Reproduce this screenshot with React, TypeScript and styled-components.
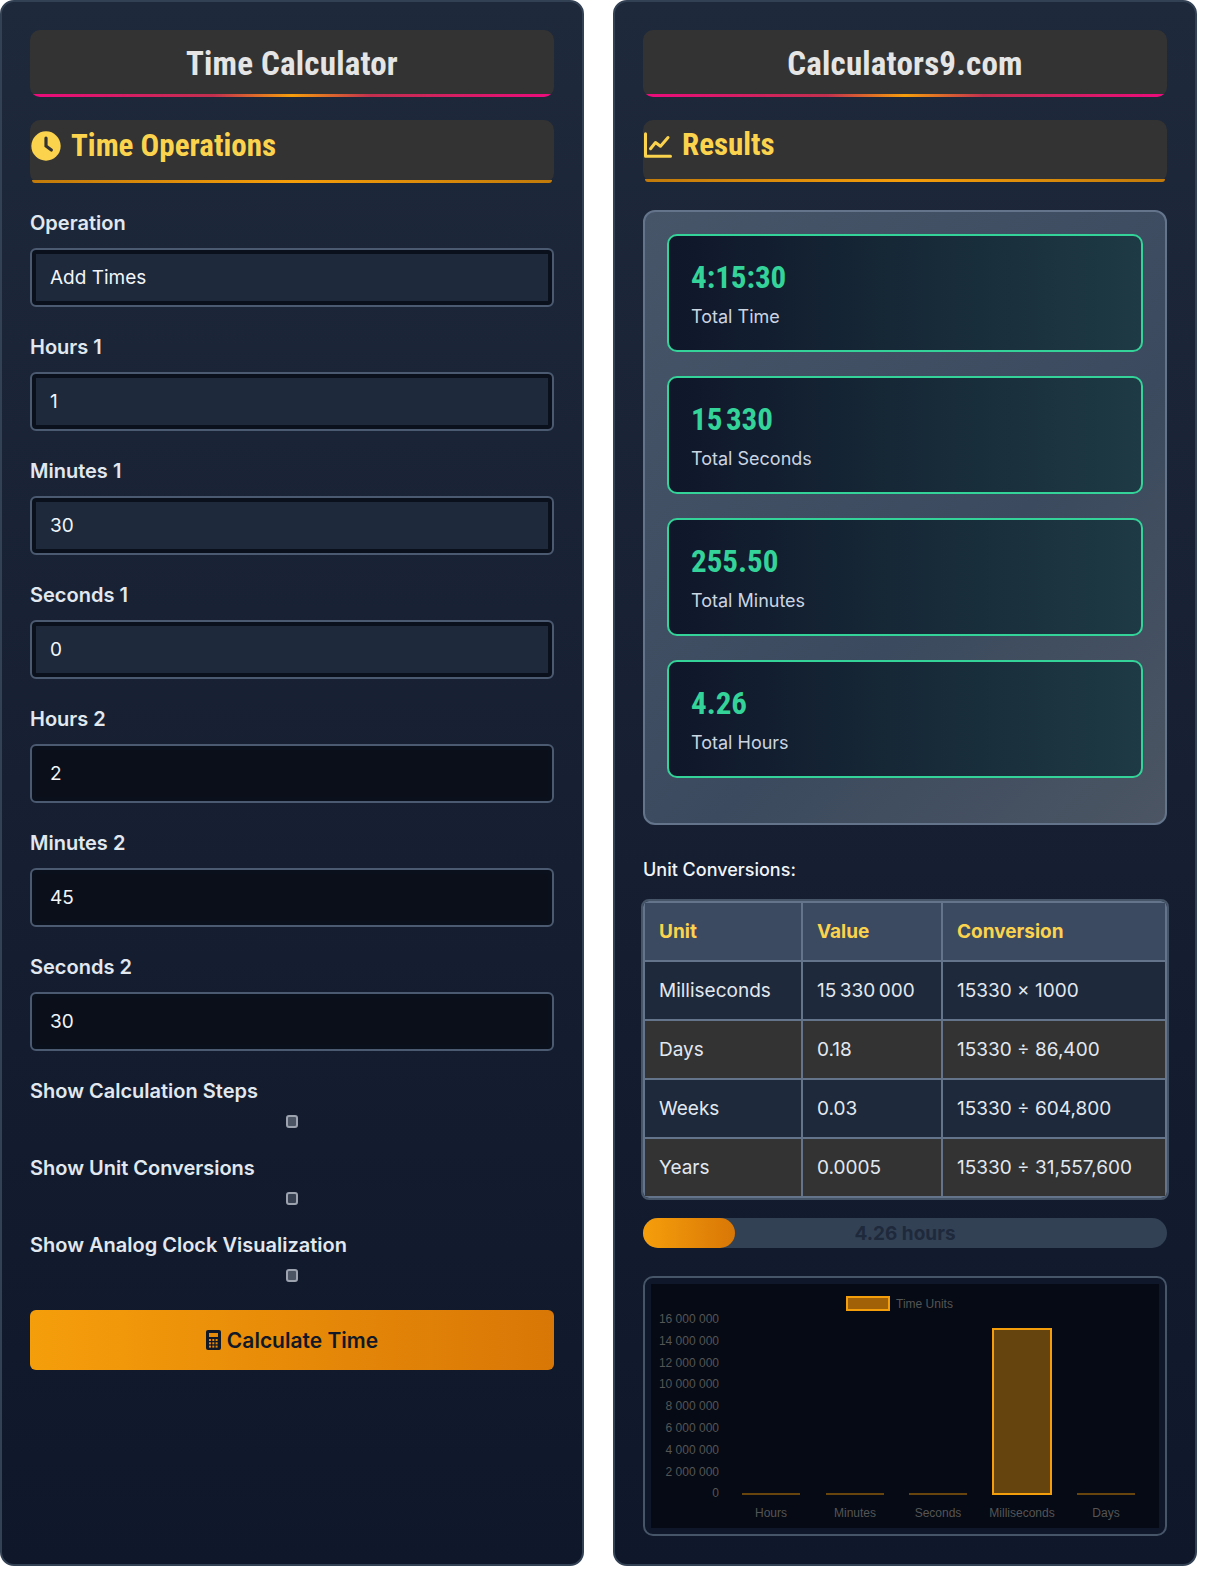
import React from "react";
import styled, { createGlobalStyle } from "styled-components";

const Global = createGlobalStyle`
  html, body { margin: 0; padding: 0; background: #fff; overflow: hidden; }
  body { font-family: Inter, "Noto Sans", sans-serif; }
  * { box-sizing: border-box; }
`;
const Cond = `"Roboto Condensed", "Liberation Sans Narrow", "Open Sans Condensed", Roboto, sans-serif`;

const Page = styled.div`
  display: flex; gap: 29px; width: 1206px; height: 1566px;
`;
const Panel = styled.div`
  width: 584px; height: 1566px; border-radius: 14px; border: 2px solid #334155;
  background: linear-gradient(180deg, #1e293b 0%, #0f172a 100%);
  padding: 28px 28px; display: flex; flex-direction: column; flex-shrink: 0;
`;
const TitleBar = styled.div`
  height: 67px; border-radius: 10px; background: #333;
  display: flex; align-items: center; justify-content: center;
  position: relative; overflow: hidden;
  font-family: ${Cond}; font-weight: 700; font-size: 33px; color: #e5e5e5; letter-spacing: 0.2px;
  &::after { content: ""; position: absolute; left: 2px; right: 2px; bottom: 0; height: 3px;
    background: linear-gradient(90deg, #ec0c7c, #c2304e 35%, #f59e0b 50%, #c2304e 65%, #ec0c7c); border-radius: 0 0 6px 6px; }
`;
const SectionBar = styled.div`
  margin-top: 23px; height: 63px; border-radius: 10px; background: #333; position: relative;
  display: flex; align-items: center; gap: 9px; padding-bottom: 12px;
  font-family: ${Cond}; font-weight: 700; font-size: 31px; color: #fcd34d;
  &::after { content: ""; position: absolute; left: 2px; right: 2px; bottom: 0; height: 3px;
    background: linear-gradient(90deg, #c17a0a, #f59e0b 50%, #c17a0a); border-radius: 0 0 6px 6px; }
`;
const Form = styled.div` display: flex; flex-direction: column; margin-top: 28px; `;
const Field = styled.div` display: flex; flex-direction: column; gap: 13px; margin-bottom: 28px; `;
const Label = styled.div` font-size: 20px; font-weight: 600; color: #e2e8f0; line-height: 24px; `;
const Input = styled.div<{ $dark?: boolean }>`
  height: 59px; border-radius: 6px; border: 2px solid #4b5a70;
  background: ${p => (p.$dark ? "#0b0f19" : "#1e293b")};
  box-shadow: inset 0 0 0 4px #0b111c;
  display: flex; align-items: center; padding: 0 18px; font-size: 19px; color: #f1f5f9;
`;
const CheckField = styled.div` display: flex; flex-direction: column; align-items: flex-start; margin-bottom: 28px; `;
const Check = styled.div<{ $on?: boolean }>`
  align-self: center; margin-top: 12px; width: 12px; height: 13px; border-radius: 3px;
  border: 2px solid #9ca3af; background: ${p => (p.$on ? "#374151" : "#4b5563")};
`;
const Button = styled.div`
  margin-top: 0px; height: 60px; border-radius: 6px;
  background: linear-gradient(90deg, #f59e0b, #d97706);
  display: flex; align-items: center; justify-content: center; gap: 6px;
  font-size: 21px; font-weight: 600; color: #111827;
`;
const ResultsBox = styled.div`
  margin-top: 28px; border-radius: 12px; border: 2px solid #64748b;
  background: linear-gradient(135deg, #475569, #3b4a5e 60%, #4b5563);
  padding: 22px 22px 45px; display: flex; flex-direction: column; gap: 24px;
`;
const Card = styled.div`
  height: 118px; border-radius: 10px; border: 2px solid #34d399;
  background: linear-gradient(90deg, #0f172a, #1e3a44);
  padding: 24px 22px; display: flex; flex-direction: column; gap: 10px;
`;
const CardVal = styled.div` font-family: ${Cond}; font-weight: 700; font-size: 31px; color: #34d399; line-height: 36px; `;
const CardLbl = styled.div` font-size: 18px; color: #cbd5e1; `;
const SubHead = styled.div` margin-top: 34px; font-size: 18px; color: #f1f5f9; font-weight: 500; `;
const Table = styled.table`
  margin-top: 21px; width: 100%; border-collapse: collapse; border-radius: 6px; overflow: hidden;
  outline: 2px solid #475569; font-size: 19px; color: #e2e8f0;
  th, td { border: 2px solid #64748b; height: 59px; padding: 0 14px; text-align: left; }
  th { background: #3b4a60; color: #fcd34d; font-weight: 700; }
  tbody tr:nth-child(odd) td { background: #1e293b; }
  tbody tr:nth-child(even) td { background: #333333; }
`;
const Progress = styled.div`
  margin-top: 20px; height: 30px; border-radius: 15px; background: #334155; position: relative;
  display: flex; align-items: center; justify-content: center;
  font-size: 19px; font-weight: 700; color: #1e293b;
`;
const Fill = styled.div`
  position: absolute; left: 0; top: 0; bottom: 0; border-radius: 15px;
  background: linear-gradient(90deg, #f59e0b, #d97706);
`;
const ProgressText = styled.span` position: relative; `;
const ChartBox = styled.div`
  margin-top: 28px; height: 260px; border-radius: 10px; border: 2px solid #475569;
  background: #0f172a; padding: 6px;
`;
const ChartInner = styled.div` background: #050a14; height: 100%; `;

const Clock = () => (
  <svg width="32" height="32" viewBox="0 0 24 24"><circle cx="12" cy="12" r="11" fill="#fcd34d" />
    <path d="M12 6v6l4 3" stroke="#333" strokeWidth="2.4" fill="none" strokeLinecap="round" /></svg>
);
const ChartIcon = () => (
  <svg width="30" height="30" viewBox="0 0 24 24" fill="none" stroke="#fcd34d" strokeWidth="2.4" strokeLinecap="round" strokeLinejoin="round">
    <path d="M2 3v18h20" /><path d="M6 15l4-5 4 3 6-7" /></svg>
);
const Calc = () => (
  <svg width="15" height="20" viewBox="0 0 15 20"><rect x="0" y="0" width="15" height="20" rx="2" fill="#111827" />
    <rect x="3" y="3" width="9" height="4" fill="#e68a0a" />
    {[0, 1, 2].map(r => [0, 1, 2].map(c => <rect key={r + "" + c} x={3 + c * 3.3} y={9 + r * 3.3} width="2" height="2" fill="#e68a0a" />))}
  </svg>
);

const fields = [
  ["Operation", "Add Times", false], ["Hours 1", "1", false], ["Minutes 1", "30", false], ["Seconds 1", "0", false],
  ["Hours 2", "2", true], ["Minutes 2", "45", true], ["Seconds 2", "30", true],
] as const;

const Chart = () => {
  const ox = 651, oy = 1286;
  const ticks = ["16 000 000", "14 000 000", "12 000 000", "10 000 000", "8 000 000", "6 000 000", "4 000 000", "2 000 000", "0"];
  const cats = ["Hours", "Minutes", "Seconds", "Milliseconds", "Days"];
  const cx = [771, 855, 938, 1022, 1106];
  return (
    <svg width="100%" height="100%" viewBox="0 0 508 244" style={{ display: "block" }} fontFamily="Liberation Sans, Arial, sans-serif">
      <rect x={847 - ox} y={1299 - oy} width="42" height="13" fill="#a16207" stroke="#f59e0b" strokeWidth="2" />
      <text x={896 - ox} y={1310 - oy} fontSize="12" fill="#555">Time Units</text>
      {ticks.map((t, i) => (
        <text key={t} x={719 - ox} y={1325 - oy + i * 21.8} fontSize="12" fill="#555" textAnchor="end">{t}</text>
      ))}
      {cx.map((x, i) => (
        <g key={i}>
          {i === 3 ? <rect x={x - 29 - ox} y={1331 - oy} width="58" height={165} fill="#65440e" stroke="#f59e0b" strokeWidth="2" />
            : <line x1={x - 29 - ox} x2={x + 29 - ox} y1={1496 - oy} y2={1496 - oy} stroke="#8a5a0a" strokeWidth="1.5" />}
          <text x={x - ox} y={1519 - oy} fontSize="12" fill="#555" textAnchor="middle">{cats[i]}</text>
        </g>
      ))}
    </svg>
  );
};

export default function App() {
  return (
    <Page>
      <Global />
      <Panel>
        <TitleBar>Time Calculator</TitleBar>
        <SectionBar><Clock />Time Operations</SectionBar>
        <Form>
          {fields.map(([l, v, d]) => (
            <Field key={l}><Label>{l}</Label><Input $dark={d}>{v}</Input></Field>
          ))}
          <CheckField><Label>Show Calculation Steps</Label><Check /></CheckField>
          <CheckField><Label>Show Unit Conversions</Label><Check $on /></CheckField>
          <CheckField><Label>Show Analog Clock Visualization</Label><Check /></CheckField>
          <Button><Calc />Calculate Time</Button>
        </Form>
      </Panel>
      <Panel>
        <TitleBar>Calculators9.com</TitleBar>
        <SectionBar><ChartIcon />Results</SectionBar>
        <ResultsBox>
          {[["4:15:30", "Total Time"], ["15\u202f330", "Total Seconds"], ["255.50", "Total Minutes"], ["4.26", "Total Hours"]].map(([v, l]) => (
            <Card key={l}><CardVal>{v}</CardVal><CardLbl>{l}</CardLbl></Card>
          ))}
        </ResultsBox>
        <SubHead>Unit Conversions:</SubHead>
        <Table>
          <colgroup><col style={{ width: 158 }} /><col style={{ width: 140 }} /><col /></colgroup>
          <thead><tr><th>Unit</th><th>Value</th><th>Conversion</th></tr></thead>
          <tbody>
            <tr><td>Milliseconds</td><td>15{"\u202f"}330{"\u202f"}000</td><td>15330 × 1000</td></tr>
            <tr><td>Days</td><td>0.18</td><td>15330 ÷ 86,400</td></tr>
            <tr><td>Weeks</td><td>0.03</td><td>15330 ÷ 604,800</td></tr>
            <tr><td>Years</td><td>0.0005</td><td>15330 ÷ 31,557,600</td></tr>
          </tbody>
        </Table>
        <Progress><Fill style={{ width: "17.6%" }} /><ProgressText>4.26 hours</ProgressText></Progress>
        <ChartBox><ChartInner><Chart /></ChartInner></ChartBox>
      </Panel>
    </Page>
  );
}
